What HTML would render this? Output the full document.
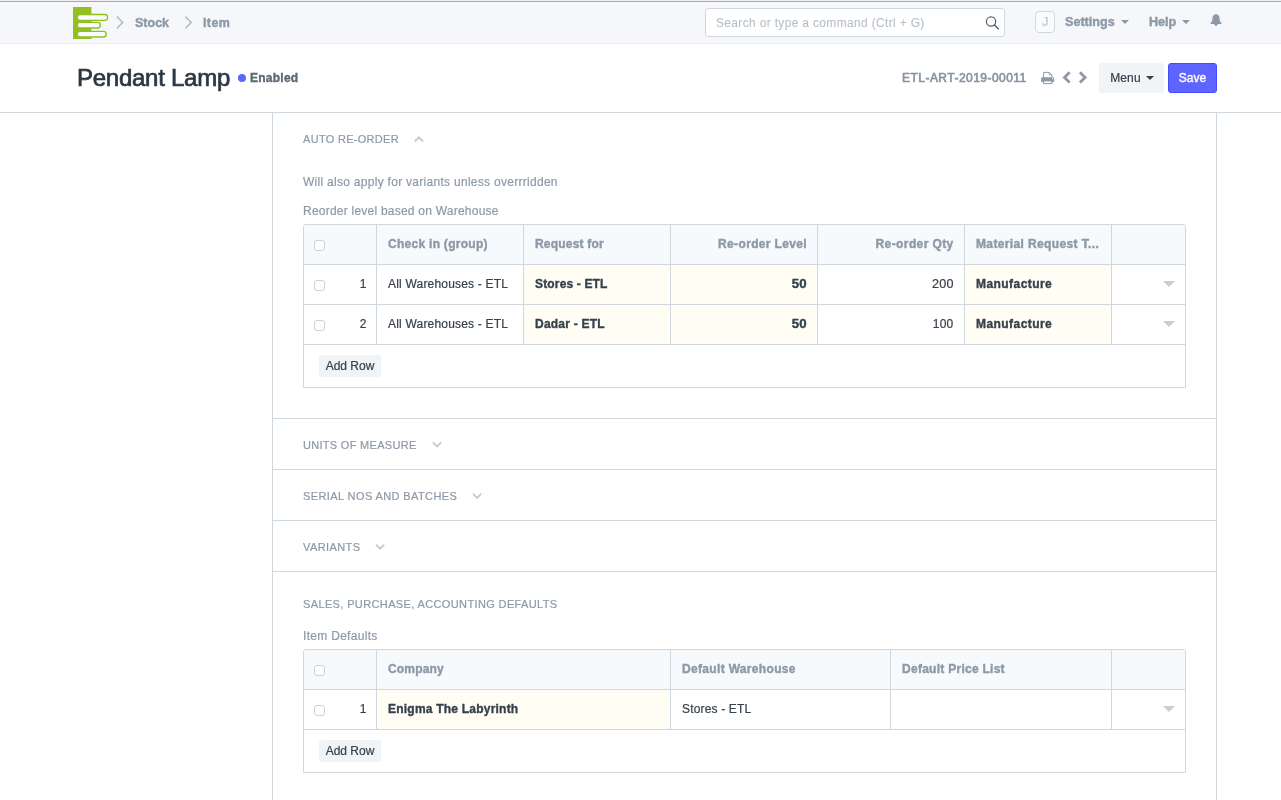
<!DOCTYPE html>
<html lang="en">
<head>
<meta charset="utf-8">
<title>Pendant Lamp - ETL-ART-2019-00011</title>
<style>
*{box-sizing:border-box}
html,body{margin:0;padding:0}
body{width:1281px;height:800px;overflow:hidden;background:#fff;font-family:"Liberation Sans",Arial,sans-serif;font-size:12px;color:#36414c;position:relative;-webkit-text-stroke:.2px}
.abs{position:absolute;white-space:nowrap;will-change:transform}
#topline{left:0;top:0;width:1281px;height:2px;background:linear-gradient(#f0eff1 0,#f0eff1 50%,#aaa7ac 50%,#aaa7ac 100%)}
#navbar{left:0;top:2px;width:1281px;height:42px;background:#f5f7fa;border-bottom:1px solid #e9edf0}
.crumb{-webkit-text-stroke:.4px;font-weight:bold;font-size:12.5px;color:#8d99a6;top:15px;line-height:16px}
#search{left:705px;top:8px;width:300px;height:29px;border:1px solid #d1d8dd;border-radius:3px;background:#fff}
#search span{-webkit-text-stroke:.1px;position:absolute;left:10px;top:6px;font-size:12px;color:#b8c0c8;line-height:16px;letter-spacing:.33px}
#avatar{left:1035px;top:11px;width:20px;height:22px;border:1px solid #d1d8dd;border-radius:4px;background:#fafbfc;color:#c0c7ce;font-size:13.500px;text-align:center;line-height:20px}
.navlink{-webkit-text-stroke:.4px;font-weight:bold;font-size:12.6px;color:#8d99a6;top:14px;line-height:16px}
.caret{display:inline-block;width:0;height:0;border-left:4px solid transparent;border-right:4px solid transparent;border-top:4px solid currentColor;vertical-align:middle;margin-left:5px;position:relative;top:-1px}
.navlink .caret{margin-left:6.500px}
#title{left:77px;top:63px;font-size:24px;line-height:30px;color:#2d3743;letter-spacing:-.26px;-webkit-text-stroke:.7px #2d3743}
#dot{left:238px;top:74px;width:8px;height:8px;border-radius:50%;background:#5e64ff}
#enabled{-webkit-text-stroke:.35px;left:250px;top:70px;letter-spacing:.25px;font-size:12px;line-height:16px;font-weight:bold;color:#5c6873}
#docname{left:902px;top:70px;font-size:12px;letter-spacing:.47px;line-height:16px;color:#8692a0;-webkit-text-stroke:.6px #8692a0}
#menu{left:1099px;top:63px;width:65px;height:30px;background:#f0f4f7;border-radius:3px;font-size:12px;line-height:30px;text-align:center;color:#36414c}
#save{left:1168px;top:63px;width:49px;height:30px;background:#5e64ff;border:1px solid #444bff;border-radius:3px;font-size:12px;line-height:28px;text-align:center;color:#fff;-webkit-text-stroke:.4px}
#headline{left:0;top:112px;width:1281px;height:1px;background:#d1d8dd}
#main{left:272px;top:113px;width:945px;height:687px;border-left:1px solid #d1d8dd;border-right:1px solid #d1d8dd}
.hr{left:273px;width:943px;height:1px;background:#d1d8dd}
.sect{left:303px;font-size:11px;line-height:14px;color:#8d99a6;letter-spacing:.3px;text-transform:uppercase}
.lbl{left:303px;font-size:12px;line-height:16px;color:#8d99a6}
.grid{left:303px;width:883px;border:1px solid #d1d8dd;border-radius:3px 3px 0 0;background:#fff}
.row{position:absolute;left:0;width:881px;height:40px;border-bottom:1px solid #d1d8dd}
.row.head{background:#f7fafc;color:#8d99a6;font-weight:bold;-webkit-text-stroke:.4px;border-radius:3px 3px 0 0}
.cell{position:absolute;top:0;height:39px;border-left:1px solid #d1d8dd;font-size:12px;line-height:39px;padding:0 10px 0 11px;white-space:nowrap;overflow:hidden}
.cell.r{text-align:right}
.cell.b{background:#fffdf4;font-weight:bold;color:#36414c;-webkit-text-stroke:.35px}
.cb{position:absolute;left:10px;top:15px;width:11px;height:11px;border:1px solid #cbd2d8;border-radius:3px;background:#fff}
.idx{-webkit-text-stroke:.2px;position:absolute;left:30.400px;width:32px;top:0;line-height:39px;text-align:right;font-size:12px;color:#36414c;font-weight:normal}
.dd{position:absolute;left:51px;top:16px;width:0;height:0;border-left:6px solid transparent;border-right:6px solid transparent;border-top:6px solid #c8cdd2}
.addrow{position:absolute;left:15px;height:22px;width:62px;background:#f0f4f7;border-radius:3px;font-size:12px;line-height:22px;text-align:center;color:#36414c}
</style>
</head>
<body>
<div class="abs" id="topline"></div>
<div class="abs" id="navbar"></div>

<svg class="abs" style="left:70px;top:4px" width="42" height="38" viewBox="70 4 42 38">
<rect x="73" y="7" width="18.400" height="32" fill="#93c01f"/>
<rect x="77.200" y="14.500" width="30.400" height="5.800" rx="2.900" fill="#f9fafc" stroke="#93c01f" stroke-width="1.300"/>
<rect x="77.200" y="22.400" width="23.200" height="5.600" rx="2.800" fill="#f9fafc" stroke="#93c01f" stroke-width="1.300"/>
<rect x="77.200" y="31.400" width="29.100" height="5.600" rx="2.800" fill="#f9fafc" stroke="#93c01f" stroke-width="1.300"/>
</svg>
<svg class="abs" style="left:114px;top:14px" width="12" height="17" viewBox="114 14 12 17"><path d="M116.900 16.600L122.700 22.400L116.900 28.200" fill="none" stroke="#b3bcc5" stroke-width="1.5"/></svg>
<div class="abs crumb" style="left:135px">Stock</div>
<svg class="abs" style="left:182px;top:14px" width="12" height="17" viewBox="182 14 12 17"><path d="M185.400 16.600L191.200 22.400L185.400 28.200" fill="none" stroke="#b3bcc5" stroke-width="1.5"/></svg>
<div class="abs crumb" style="left:203px;letter-spacing:.4px">Item</div>

<div class="abs" id="search"><span>Search or type a command (Ctrl + G)</span>
<svg style="position:absolute;left:278px;top:5px" width="18" height="18" viewBox="984 14 18 18"><circle cx="991.050" cy="21.550" r="4.650" fill="none" stroke="#58636e" stroke-width="1.200"/><path d="M994.500 25L998.300 28.800" stroke="#58636e" stroke-width="1.600" stroke-linecap="round"/></svg>
</div>
<div class="abs" id="avatar">J</div>
<div class="abs navlink" style="left:1065px">Settings<span class="caret"></span></div>
<div class="abs navlink" style="left:1149px">Help<span class="caret" style="margin-left:5.500px"></span></div>
<svg class="abs" style="left:1208px;top:11px" width="16" height="18" viewBox="1208 11 16 18">
<path d="M1216 13.800c.500 0 .800 .300 .800 .700c1.700 .400 2.700 1.800 2.700 3.600c0 2.200 .400 3.400 1.500 4.400c.300 .300 .500 .600 .500 .900v.500h-11v-.500c0-.300 .200-.600 .500-.900c1.100-1 1.500-2.200 1.500-4.400c0-1.800 1-3.200 2.700-3.600c0-.400 .300-.700 .800-.700z" fill="#8d99a6"/>
<path d="M1214.300 24h3.400c0 1.100-.800 1.900-1.700 1.900s-1.700-.800-1.700-1.900z" fill="#8d99a6"/>
</svg>

<div class="abs" id="title">Pendant Lamp</div>
<div class="abs" id="dot"></div>
<div class="abs" id="enabled">Enabled</div>
<div class="abs" id="docname">ETL-ART-2019-00011</div>
<svg class="abs" style="left:1038px;top:68px" width="54" height="20" viewBox="1038 68 54 20">
<path d="M1043.600 77.500V72.400h5.800l2.400 2.400v2.700" fill="#fff" stroke="#8d99a6" stroke-width="1"/>
<path d="M1049.200 72.400v2.600h2.600" fill="none" stroke="#8d99a6" stroke-width=".8"/>
<path d="M1042.400 77.200h10.500a1.300 1.300 0 0 1 1.300 1.300v3.400h-13.100v-3.400a1.300 1.300 0 0 1 1.300-1.300z" fill="#8d99a6"/>
<rect x="1043.600" y="80.900" width="8.200" height="2.700" fill="#fff" stroke="#8d99a6" stroke-width="1"/>
<circle cx="1052.600" cy="78.700" r=".6" fill="#fff"/>
<path d="M1069.610 72.290L1064.450 77.450L1069.610 82.610" fill="none" stroke="#8d99a6" stroke-width="2.800"/>
<path d="M1079.900 72.290L1085.060 77.450L1079.900 82.610" fill="none" stroke="#8d99a6" stroke-width="2.800"/>
</svg>
<div class="abs" id="menu"><span style="letter-spacing:.15px;margin-left:.9px">Menu</span><span class="caret"></span></div>
<div class="abs" id="save">Save</div>
<div class="abs" id="headline"></div>
<div class="abs" id="main"></div>

<div class="abs sect" style="top:132px">Auto re-order</div>
<div class="abs lbl" style="top:174px"><span style="letter-spacing:0.285px">Will also apply for variants unless overrridden</span></div>
<div class="abs lbl" style="top:203px"><span style="letter-spacing:0.23px">Reorder level based on Warehouse</span></div>

<div class="abs grid" style="top:224px;height:164px">
  <div class="row head" style="top:0">
    <span class="cb"></span>
    <div class="cell" style="left:72px;width:147px"><span style="letter-spacing:0.28px">Check in (group)</span></div>
    <div class="cell" style="left:219px;width:147px"><span style="letter-spacing:0.2px">Request for</span></div>
    <div class="cell r" style="left:366px;width:147px"><span style="letter-spacing:.35px">Re-order Level</span></div>
    <div class="cell r" style="left:513px;width:147px"><span style="letter-spacing:.4px;margin-right:.3px">Re-order Qty</span></div>
    <div class="cell" style="left:660px;width:147px"><span style="letter-spacing:0.37px">Material Request T...</span></div>
    <div class="cell" style="left:807px;width:74px"></div>
  </div>
  <div class="row" style="top:40px">
    <span class="cb"></span><span class="idx">1</span>
    <div class="cell" style="left:72px;width:147px"><span style="letter-spacing:0.195px">All Warehouses - ETL</span></div>
    <div class="cell b" style="left:219px;width:147px"><span style="letter-spacing:0.16px">Stores - ETL</span></div>
    <div class="cell b r" style="left:366px;width:147px"><span style="display:inline-block;transform:scaleX(1.1);transform-origin:100% 50%;letter-spacing:.2px;margin-right:.5px">50</span></div>
    <div class="cell r" style="left:513px;width:147px"><span style="display:inline-block;transform:scaleX(1.05);transform-origin:100% 50%;letter-spacing:.3px;margin-right:.3px">200</span></div>
    <div class="cell b" style="left:660px;width:147px"><span style="letter-spacing:0.44px">Manufacture</span></div>
    <div class="cell" style="left:807px;width:74px"><span class="dd"></span></div>
  </div>
  <div class="row" style="top:80px">
    <span class="cb"></span><span class="idx">2</span>
    <div class="cell" style="left:72px;width:147px"><span style="letter-spacing:0.195px">All Warehouses - ETL</span></div>
    <div class="cell b" style="left:219px;width:147px"><span style="letter-spacing:0.22px">Dadar - ETL</span></div>
    <div class="cell b r" style="left:366px;width:147px"><span style="display:inline-block;transform:scaleX(1.1);transform-origin:100% 50%;letter-spacing:.2px;margin-right:.5px">50</span></div>
    <div class="cell r" style="left:513px;width:147px"><span style="letter-spacing:.2px;margin-right:.55px">100</span></div>
    <div class="cell b" style="left:660px;width:147px"><span style="letter-spacing:0.44px">Manufacture</span></div>
    <div class="cell" style="left:807px;width:74px"><span class="dd"></span></div>
  </div>
  <div class="addrow" style="top:130px">Add Row</div>
</div>

<svg class="abs" style="left:412px;top:134px" width="14" height="11" viewBox="412 134 14 11"><path d="M414.72 141.50L418.85 137.37L422.98 141.50" fill="none" stroke="#c3cbd3" stroke-width="1.9"/></svg>
<svg class="abs" style="left:430px;top:439px" width="14" height="11" viewBox="430 439 14 11"><path d="M432.87 442.37L437.00 446.50L441.13 442.37" fill="none" stroke="#c3cbd3" stroke-width="1.9"/></svg>
<svg class="abs" style="left:470px;top:491px" width="14" height="11" viewBox="470 491 14 11"><path d="M472.97 493.67L477.10 497.80L481.23 493.67" fill="none" stroke="#c3cbd3" stroke-width="1.9"/></svg>
<svg class="abs" style="left:373px;top:541px" width="14" height="11" viewBox="373 541 14 11"><path d="M375.97 544.57L380.10 548.70L384.23 544.57" fill="none" stroke="#c3cbd3" stroke-width="1.9"/></svg>
<div class="abs hr" style="top:418px"></div>
<div class="abs sect" style="top:438px">Units of Measure</div>
<div class="abs hr" style="top:469px"></div>
<div class="abs sect" style="top:489px;letter-spacing:.4px">Serial Nos and Batches</div>
<div class="abs hr" style="top:520px"></div>
<div class="abs sect" style="top:540px;letter-spacing:.4px">Variants</div>
<div class="abs hr" style="top:571px"></div>
<div class="abs sect" style="top:597px;letter-spacing:.37px">Sales, Purchase, Accounting Defaults</div>
<div class="abs lbl" style="top:628px"><span style="letter-spacing:0.3px">Item Defaults</span></div>

<div class="abs grid" style="top:649px;height:124px">
  <div class="row head" style="top:0">
    <span class="cb"></span>
    <div class="cell" style="left:72px;width:294px"><span style="letter-spacing:0.17px">Company</span></div>
    <div class="cell" style="left:366px;width:220px"><span style="letter-spacing:0.33px">Default Warehouse</span></div>
    <div class="cell" style="left:586px;width:221px"><span style="letter-spacing:0.27px">Default Price List</span></div>
    <div class="cell" style="left:807px;width:74px"></div>
  </div>
  <div class="row" style="top:40px">
    <span class="cb"></span><span class="idx">1</span>
    <div class="cell b" style="left:72px;width:294px"><span style="letter-spacing:0.22px">Enigma The Labyrinth</span></div>
    <div class="cell" style="left:366px;width:220px"><span style="letter-spacing:0.16px">Stores - ETL</span></div>
    <div class="cell" style="left:586px;width:221px"></div>
    <div class="cell" style="left:807px;width:74px"><span class="dd"></span></div>
  </div>
  <div class="addrow" style="top:90px">Add Row</div>
</div>
</body>
</html>
